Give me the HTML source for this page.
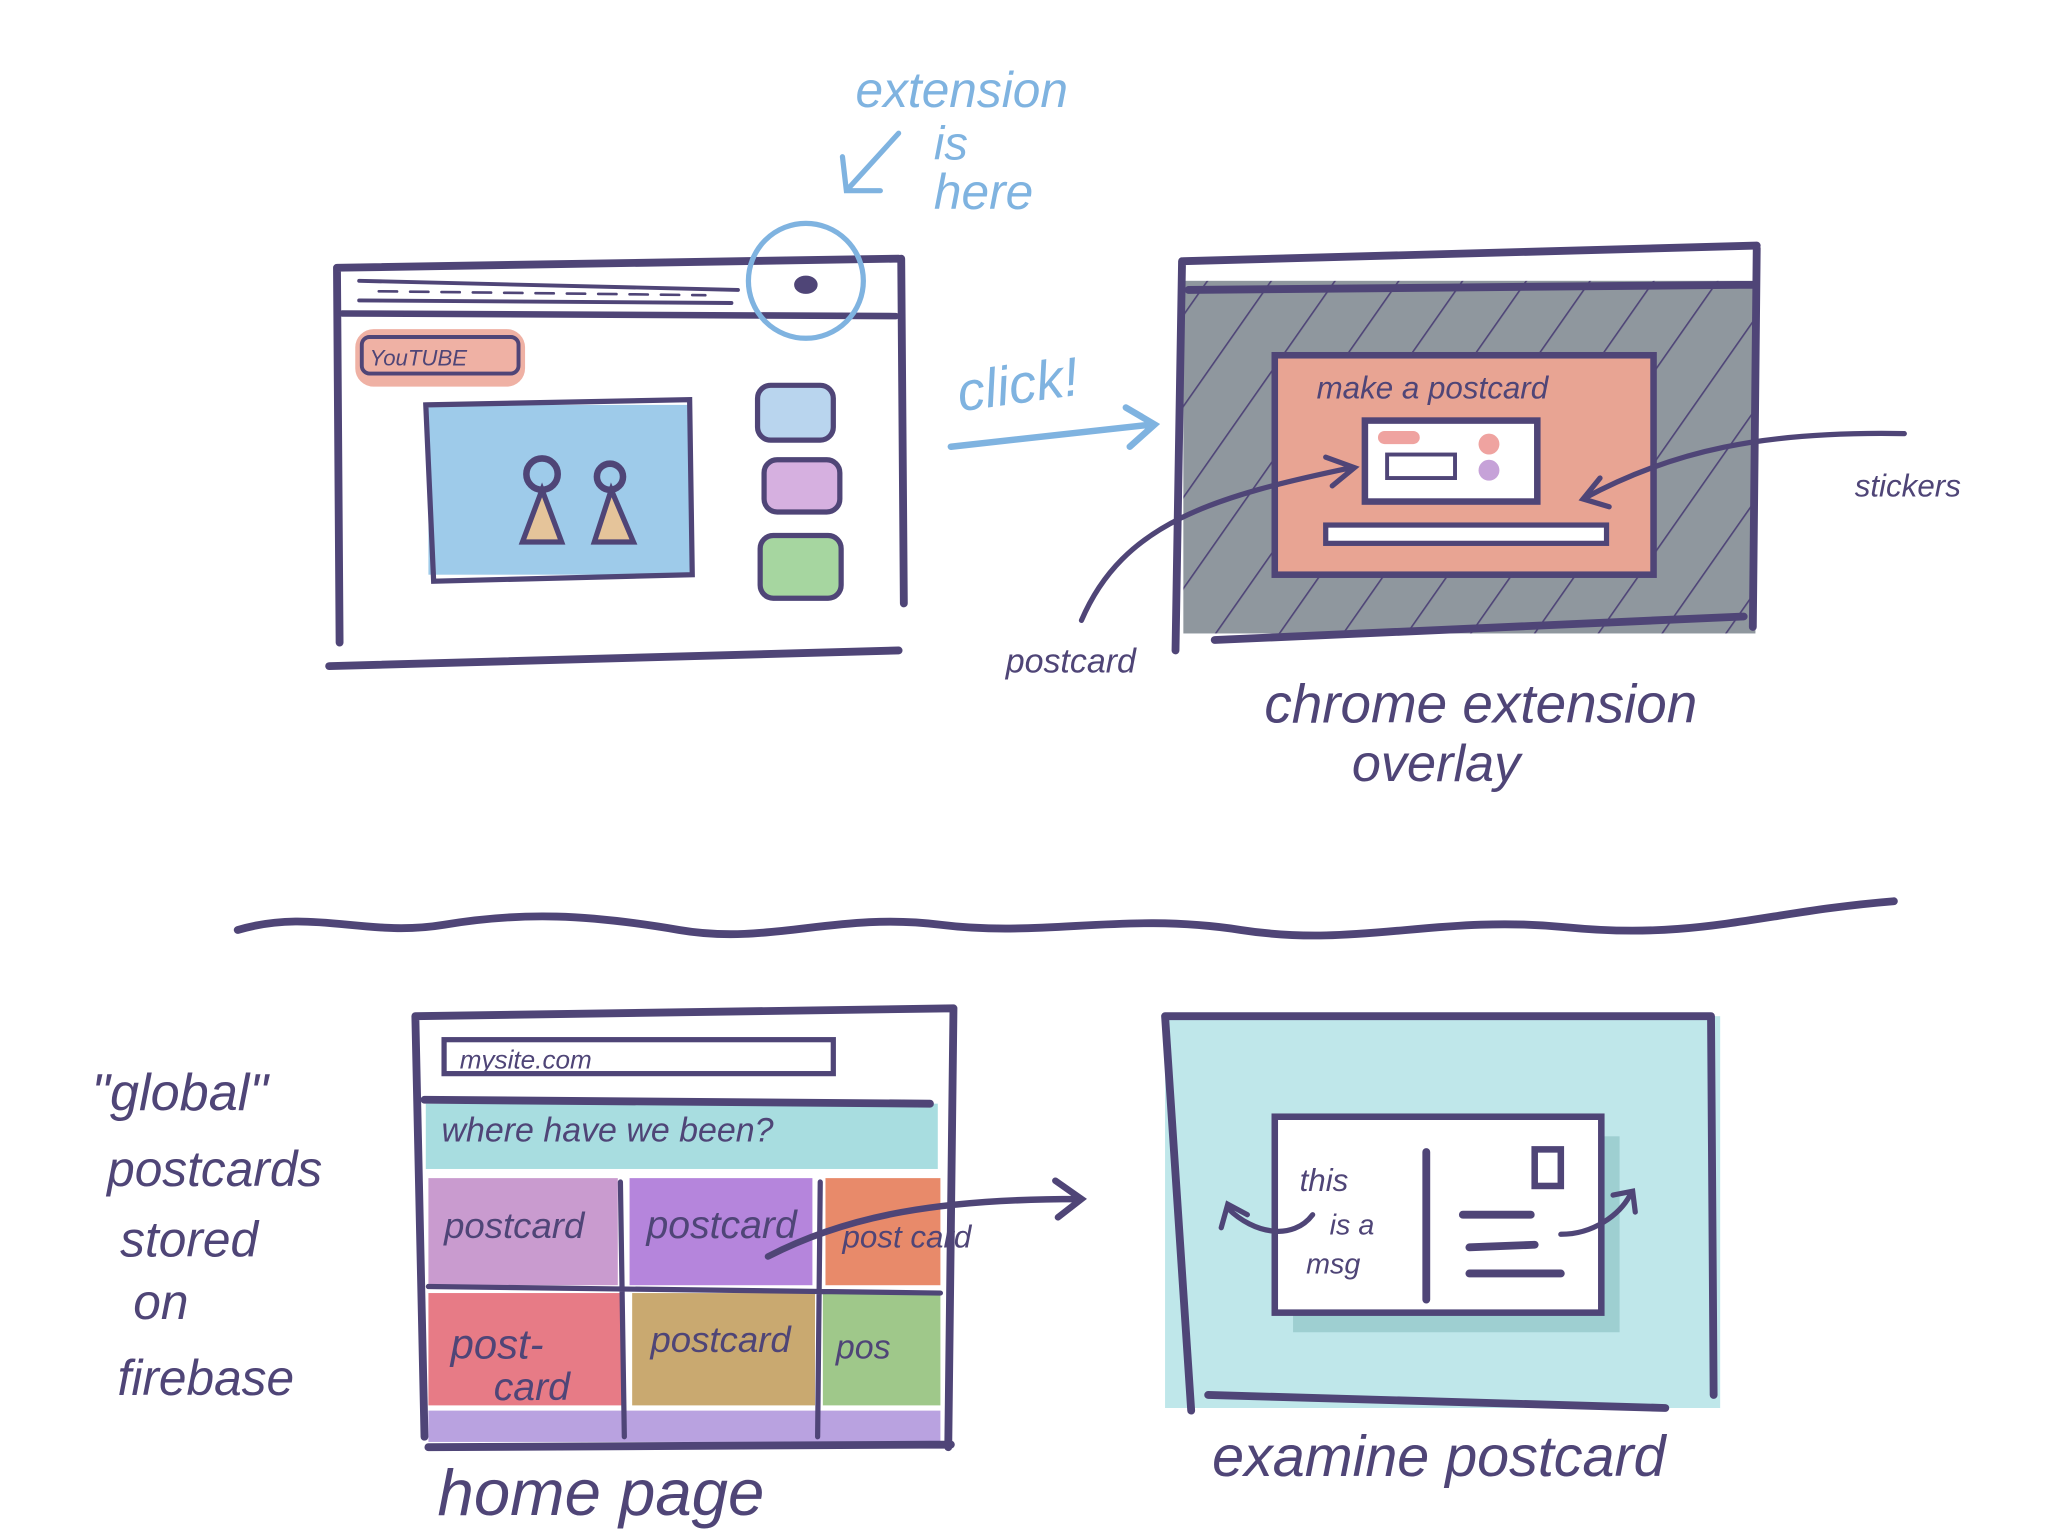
<!DOCTYPE html>
<html><head><meta charset="utf-8"><style>
html,body{margin:0;padding:0;background:#fff;}
svg{display:block;}
text{font-family:"Liberation Sans",sans-serif;font-style:italic;}
</style></head><body>
<svg width="2048" height="1536" viewBox="0 0 1568 1176" preserveAspectRatio="none" xmlns="http://www.w3.org/2000/svg">
<defs>
<pattern id="diag" width="40" height="40" patternUnits="userSpaceOnUse" patternTransform="rotate(35)">
<rect width="40" height="40" fill="#8f979e"/>
<line x1="0" y1="0" x2="0" y2="40" stroke="#4f4577" stroke-width="2.5"/>
</pattern>
</defs>
<g fill="none" stroke="#4f4577" stroke-width="6" stroke-linecap="round">
<!-- top-left browser -->
<path d="M258 205 L688 198 M258 205 L260 492 M690 198 L692 462 M252 510 L688 498"/>
<path d="M262 240 L686 242" stroke-width="5"/>
<path d="M275 215 L565 222 M275 230 L560 232" stroke-width="3"/>
<path d="M290 223 L540 226" stroke-width="2" stroke-dasharray="14 10"/>
<ellipse cx="617" cy="218" rx="8" ry="6" fill="#4f4577" stroke-width="2"/>
</g>
<rect x="272" y="252" width="130" height="44" rx="14" fill="#efb1a4"/>
<rect x="277" y="258" width="120" height="28" rx="6" fill="none" stroke="#4f4577" stroke-width="3"/>
<text x="283" y="280" font-size="17" fill="#4f4577">YouTUBE</text>
<rect x="328" y="310" width="200" height="130" fill="#9ecbea"/>
<path d="M326 310 L528 306 L530 440 L332 445 Z" fill="none" stroke="#4f4577" stroke-width="4"/>
<path d="M400 415 L415 375 L430 415 Z M455 415 L468 375 L485 415 Z" fill="#e5c49a" stroke="#4f4577" stroke-width="4"/>
<circle cx="415" cy="363" r="12" fill="none" stroke="#4f4577" stroke-width="5"/>
<circle cx="467" cy="365" r="10" fill="none" stroke="#4f4577" stroke-width="5"/>
<rect x="580" y="295" width="58" height="42" rx="10" fill="#b9d5ee" stroke="#4f4577" stroke-width="4"/>
<rect x="585" y="352" width="58" height="40" rx="10" fill="#d6b0e0" stroke="#4f4577" stroke-width="4"/>
<rect x="582" y="410" width="62" height="48" rx="10" fill="#a6d6a0" stroke="#4f4577" stroke-width="4"/>
<!-- blue annotations -->
<circle cx="617" cy="215" r="44" fill="none" stroke="#7fb3e0" stroke-width="4"/>
<text x="655" y="82" font-size="38" fill="#7fb3e0">extension</text>
<text x="715" y="122" font-size="36" fill="#7fb3e0">is</text>
<text x="715" y="160" font-size="38" fill="#7fb3e0">here</text>
<path d="M688 102 L648 146 M645 120 L648 146 L674 146" fill="none" stroke="#7fb3e0" stroke-width="4" stroke-linecap="round"/>
<text x="735" y="315" font-size="42" fill="#7fb3e0" transform="rotate(-8 735 315)">click!</text>
<path d="M728 342 L882 325 M862 312 L884 325 L865 342" fill="none" stroke="#7fb3e0" stroke-width="5" stroke-linecap="round"/>
<!-- top-right overlay -->
<rect x="906" y="215" width="438" height="270" fill="url(#diag)"/>
<g fill="none" stroke="#4f4577" stroke-width="6" stroke-linecap="round">
<path d="M906 200 L1345 188 M905 200 L900 498 M1345 190 L1342 480 M930 490 L1335 472 M910 222 L1342 218"/>
</g>
<rect x="976" y="272" width="290" height="168" fill="#e8a493" stroke="#4f4577" stroke-width="5"/>
<text x="1008" y="305" font-size="24" fill="#4f4577">make a postcard</text>
<rect x="1045" y="322" width="132" height="62" fill="#fff" stroke="#4f4577" stroke-width="5"/>
<rect x="1062" y="348" width="52" height="18" fill="none" stroke="#4f4577" stroke-width="3"/>
<rect x="1055" y="330" width="32" height="10" rx="5" fill="#efa3a0"/>
<circle cx="1140" cy="340" r="8" fill="#efa3a0"/><circle cx="1140" cy="360" r="8" fill="#c6a2d8"/>
<rect x="1015" y="402" width="215" height="14" fill="#fff" stroke="#4f4577" stroke-width="4"/>
<path d="M828 475 C860 400 930 380 1035 358 M1015 350 L1037 358 L1020 372" fill="none" stroke="#4f4577" stroke-width="4" stroke-linecap="round"/>
<path d="M1458 332 C1350 330 1280 345 1212 382 M1225 366 L1212 382 L1232 388" fill="none" stroke="#4f4577" stroke-width="4" stroke-linecap="round"/>
<text x="770" y="515" font-size="26" fill="#4f4577">postcard</text>
<text x="1420" y="380" font-size="24" fill="#4f4577">stickers</text>
<text x="968" y="553" font-size="42" fill="#4f4577">chrome extension</text>
<text x="1035" y="598" font-size="40" fill="#4f4577">overlay</text>
<!-- wave -->
<path d="M182 712 C240 695 280 718 340 708 S450 700 520 712 S640 698 720 708 S860 698 950 712 S1100 700 1200 710 S1350 698 1450 690" fill="none" stroke="#4f4577" stroke-width="6" stroke-linecap="round"/>
<!-- bottom-left home page -->
<rect x="326" y="845" width="392" height="50" fill="#a8dde0"/>
<rect x="328" y="902" width="145" height="82" fill="#c99bcf"/>
<rect x="482" y="902" width="140" height="82" fill="#b585dc"/>
<rect x="632" y="902" width="88" height="82" fill="#e88a6a"/>
<rect x="328" y="990" width="150" height="86" fill="#e77b86"/>
<rect x="484" y="990" width="140" height="86" fill="#c9a970"/>
<rect x="630" y="990" width="90" height="86" fill="#9fc88a"/>
<rect x="328" y="1080" width="392" height="24" fill="#b9a2e0"/>
<g fill="none" stroke="#4f4577" stroke-width="6" stroke-linecap="round">
<path d="M318 778 L730 772 M318 778 L325 1100 M730 772 L726 1108 M328 1108 L728 1106 M325 842 L712 845"/>
<rect x="340" y="796" width="298" height="26" stroke-width="4"/>
<path d="M475 905 L478 1100 M628 905 L626 1100 M328 985 L720 990" stroke-width="4"/>
</g>
<text x="352" y="818" font-size="20" fill="#4f4577">mysite.com</text>
<text x="338" y="874" font-size="26" fill="#4f4577">where have we been?</text>
<text x="340" y="948" font-size="28" fill="#4f4577">postcard</text>
<text x="495" y="948" font-size="30" fill="#4f4577">postcard</text>
<text x="645" y="955" font-size="24" fill="#4f4577">post card</text>
<text x="345" y="1040" font-size="32" fill="#4f4577">post-</text>
<text x="378" y="1072" font-size="30" fill="#4f4577">card</text>
<text x="498" y="1035" font-size="28" fill="#4f4577">postcard</text>
<text x="640" y="1040" font-size="26" fill="#4f4577">pos</text>
<path d="M588 962 C650 930 720 918 826 918 M808 904 L828 918 L810 932" fill="none" stroke="#4f4577" stroke-width="5" stroke-linecap="round"/>
<text x="70" y="850" font-size="40" fill="#4f4577">"global"</text>
<text x="82" y="908" font-size="38" fill="#4f4577">postcards</text>
<text x="92" y="962" font-size="38" fill="#4f4577">stored</text>
<text x="102" y="1010" font-size="38" fill="#4f4577">on</text>
<text x="90" y="1068" font-size="38" fill="#4f4577">firebase</text>
<text x="335" y="1160" font-size="50" fill="#4f4577">home page</text>
<!-- bottom-right -->
<rect x="892" y="778" width="425" height="300" fill="#bfe7ea"/>
<rect x="990" y="870" width="250" height="150" fill="#9ecfd1"/>
<g fill="none" stroke="#4f4577" stroke-width="6" stroke-linecap="round">
<path d="M892 778 L1310 778 M892 778 L912 1080 M1310 778 L1312 1068 M925 1068 L1275 1078"/>
</g>
<rect x="976" y="855" width="250" height="150" fill="#fff" stroke="#4f4577" stroke-width="5"/>
<g fill="none" stroke="#4f4577" stroke-width="6" stroke-linecap="round">
<path d="M1092 882 L1092 995 M1120 930 L1172 930 M1125 955 L1175 953 M1125 975 L1195 975"/>
<rect x="1175" y="880" width="20" height="28" stroke-width="5"/>
<path d="M1005 930 C990 950 960 945 940 925 M935 940 L940 922 L955 930" stroke-width="4"/>
<path d="M1195 945 C1220 945 1240 930 1248 915 M1235 915 L1250 912 L1252 928" stroke-width="4"/>
</g>
<text x="995" y="912" font-size="24" fill="#4f4577">this</text>
<text x="1018" y="945" font-size="22" fill="#4f4577">is a</text>
<text x="1000" y="975" font-size="22" fill="#4f4577">msg</text>
<text x="928" y="1130" font-size="44" fill="#4f4577">examine postcard</text>
</svg>
</body></html>
